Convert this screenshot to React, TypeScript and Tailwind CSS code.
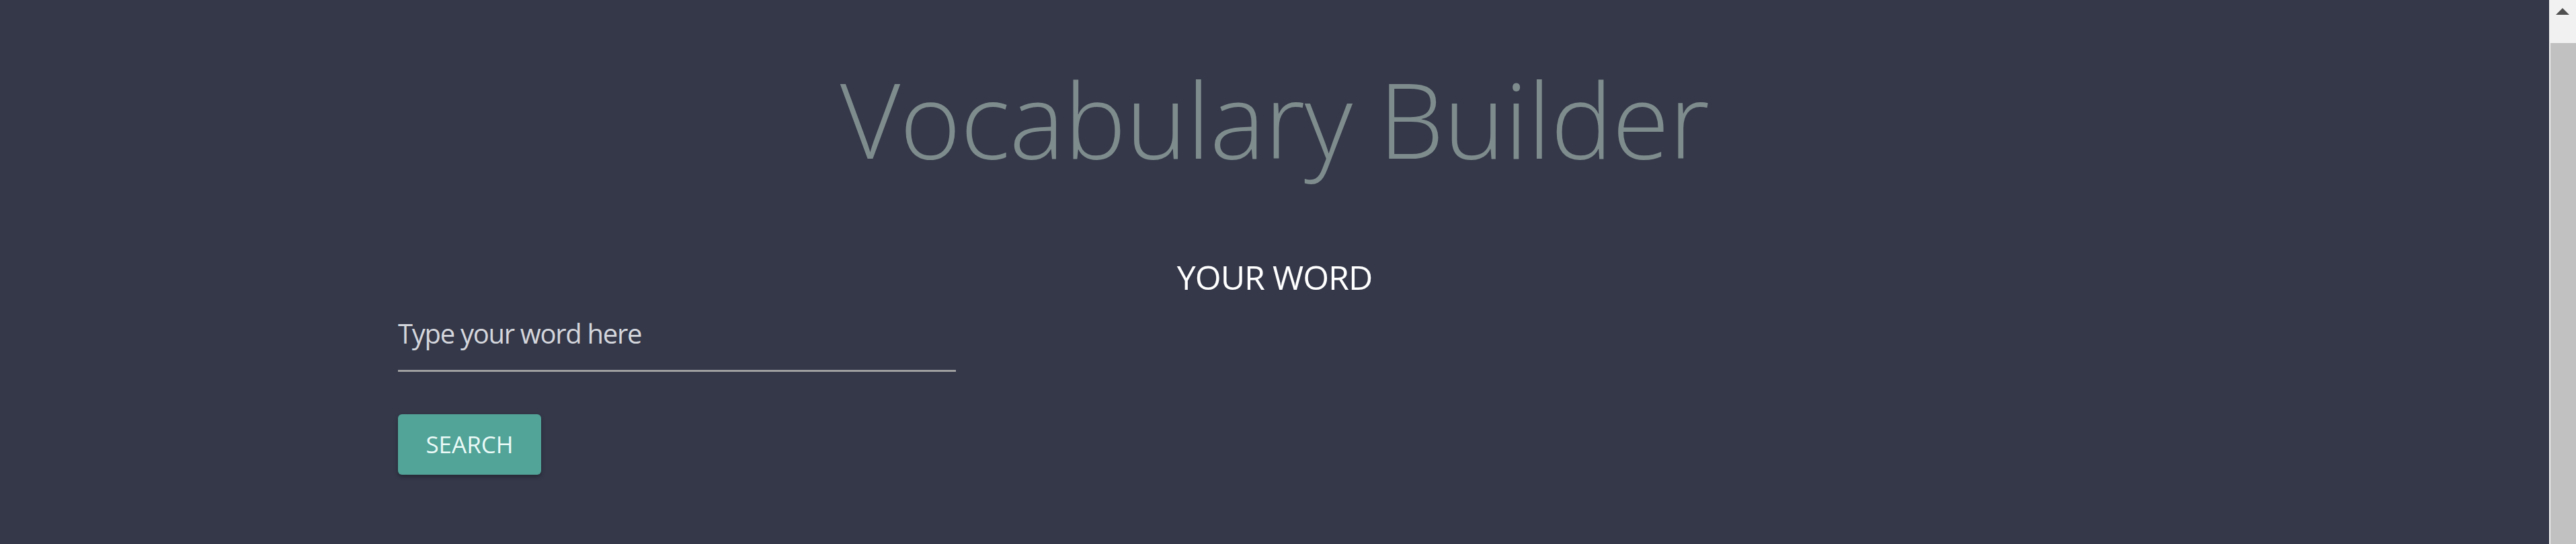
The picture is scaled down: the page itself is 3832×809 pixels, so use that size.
export default function App() {
  return (
    <div className="flex h-screen w-full overflow-hidden bg-[#343849] font-['Open_Sans',sans-serif]">
      {/* page */}
      <main className="flex-1">
        <h1 className="pt-[98px] text-center text-[155px] font-light leading-none tracking-[-0.7px] text-[#7f8c8d]">
          Vocabulary Builder
        </h1>

        <div className="mx-auto w-[2608px]">
          <h2 className="mt-[134px] text-center text-[50px] leading-none tracking-[-1px] text-white">
            YOUR WORD
          </h2>

          <form className="mt-[3px]" onSubmit={(e) => e.preventDefault()}>
            <input
              type="text"
              placeholder="Type your word here"
              className="
                block
                h-[113px]
                w-[830px]
                border-b-[3px]
                border-[#9e9e9e]
                bg-transparent
                text-[40px]
                tracking-[-1.3px]
                text-white
                outline-none
                placeholder:text-[#d4d6dc]
              "
            />

            <button
              type="submit"
              className="
                mt-[63px]
                h-[90px]
                w-[213px]
                rounded-[6px]
                bg-[#52a398]
                text-[35px]
                text-[#eafaf7]
                shadow-[0_3px_6px_rgba(0,0,0,0.3)]
              "
            >
              SEARCH
            </button>
          </form>
        </div>
      </main>

      {/* scrollbar */}
      <aside className="flex w-[40px] flex-col bg-[#f1f1f1]">
        <div className="flex h-[64px] justify-center pt-[12px]">
          <svg width="20" height="10" viewBox="0 0 20 10">
            <polygon points="10,0 20,10 0,10" fill="#505050" />
          </svg>
        </div>
        <div className="ml-[2px] flex-1 bg-[#c1c1c1]" />
      </aside>
    </div>
  );
}
